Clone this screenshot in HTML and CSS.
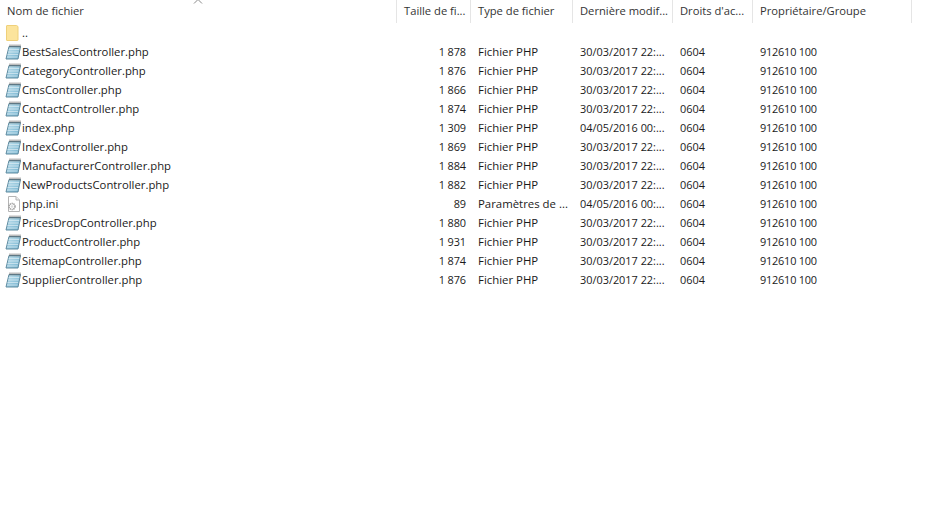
FILE: index.html
```html
<!DOCTYPE html>
<html lang="fr">
<head>
    <meta charset="UTF-8">
    <title>Fichiers distants</title>
    <link rel="stylesheet" href="styles.css">
</head>
<body>
    <svg class="defs" width="0" height="0">
        <defs>
            <linearGradient id="sheet" x1="0" y1="0" x2="1" y2="1">
                <stop offset="0" stop-color="#c4e3ef"/>
                <stop offset="1" stop-color="#6fb0cd"/>
            </linearGradient>
        </defs>
        <symbol id="icon-folder" viewBox="0 0 16 16">
            <path d="M2 .5h9.500l1.500 1v13.500a.5.5 0 0 1-.5.5H2a.5.5 0 0 1-.5-.5V1a.5.5 0 0 1 .5-.5z" fill="#fce49c" stroke="#efd07a"/>
        </symbol>
        <symbol id="icon-php" viewBox="0 0 16 16">
            <path d="M4 2.500h11.500l-2.500 12.500H1z" fill="url(#sheet)" stroke="#5f8ba0"/>
            <path d="M3.700 5.500h10.500M3 8h10.500M2.500 10.500h10.500M2 13h10.500" stroke="#dcedf4" stroke-width=".7"/>
            <path d="M5 .5v3M7 .5v3M9 .5v3M11 .5v3M13 .5v3M15 .5v3" stroke="#5a5a5a" stroke-width=".8"/>
        </symbol>
        <symbol id="icon-ini" viewBox="0 0 16 16">
            <path d="M3.500 .5h7.500l3.500 3.500v11.500h-11z" fill="#fff" stroke="#b4b4b4"/>
            <path d="M11 .5v3.500h3.500" fill="#eee" stroke="#b4b4b4"/>
            <circle cx="7" cy="10.500" r="3" fill="none" stroke="#a0a0a0" stroke-width="1.600" stroke-dasharray="1.300 .6"/>
            <circle cx="7" cy="10.500" r="1.300" fill="#dcdcdc"/>
        </symbol>
    </svg>

    <div class="list">
        <div class="row head">
            <div class="cell">Nom de fichier</div>
            <div class="cell">Taille de fi...</div>
            <div class="cell">Type de fichier</div>
            <div class="cell">Dernière modif...</div>
            <div class="cell">Droits d'ac...</div>
            <div class="cell">Propriétaire/Groupe</div>
        </div>
        <svg class="sort-caret" width="10" height="5" viewBox="0 0 10 5"><path d="M1 4.500L5 .500l4 4" fill="none" stroke="#8a8a8a"/></svg>

        <div class="row">
            <div class="cell name"><svg class="icon"><use href="#icon-folder"/></svg>..</div>
        </div>
        <div class="row">
            <div class="cell name"><svg class="icon"><use href="#icon-php"/></svg>BestSalesController.php</div>
            <div class="cell size">1 878</div><div class="cell">Fichier PHP</div><div class="cell num">30/03/2017 22:...</div><div class="cell num">0604</div><div class="cell owner">912610 100</div>
        </div>
        <div class="row">
            <div class="cell name"><svg class="icon"><use href="#icon-php"/></svg>CategoryController.php</div>
            <div class="cell size">1 876</div><div class="cell">Fichier PHP</div><div class="cell num">30/03/2017 22:...</div><div class="cell num">0604</div><div class="cell owner">912610 100</div>
        </div>
        <div class="row">
            <div class="cell name"><svg class="icon"><use href="#icon-php"/></svg>CmsController.php</div>
            <div class="cell size">1 866</div><div class="cell">Fichier PHP</div><div class="cell num">30/03/2017 22:...</div><div class="cell num">0604</div><div class="cell owner">912610 100</div>
        </div>
        <div class="row">
            <div class="cell name"><svg class="icon"><use href="#icon-php"/></svg>ContactController.php</div>
            <div class="cell size">1 874</div><div class="cell">Fichier PHP</div><div class="cell num">30/03/2017 22:...</div><div class="cell num">0604</div><div class="cell owner">912610 100</div>
        </div>
        <div class="row">
            <div class="cell name"><svg class="icon"><use href="#icon-php"/></svg>index.php</div>
            <div class="cell size">1 309</div><div class="cell">Fichier PHP</div><div class="cell num">04/05/2016 00:...</div><div class="cell num">0604</div><div class="cell owner">912610 100</div>
        </div>
        <div class="row">
            <div class="cell name"><svg class="icon"><use href="#icon-php"/></svg>IndexController.php</div>
            <div class="cell size">1 869</div><div class="cell">Fichier PHP</div><div class="cell num">30/03/2017 22:...</div><div class="cell num">0604</div><div class="cell owner">912610 100</div>
        </div>
        <div class="row">
            <div class="cell name"><svg class="icon"><use href="#icon-php"/></svg>ManufacturerController.php</div>
            <div class="cell size">1 884</div><div class="cell">Fichier PHP</div><div class="cell num">30/03/2017 22:...</div><div class="cell num">0604</div><div class="cell owner">912610 100</div>
        </div>
        <div class="row">
            <div class="cell name"><svg class="icon"><use href="#icon-php"/></svg>NewProductsController.php</div>
            <div class="cell size">1 882</div><div class="cell">Fichier PHP</div><div class="cell num">30/03/2017 22:...</div><div class="cell num">0604</div><div class="cell owner">912610 100</div>
        </div>
        <div class="row">
            <div class="cell name"><svg class="icon"><use href="#icon-ini"/></svg>php.ini</div>
            <div class="cell size">89</div><div class="cell">Paramètres de ...</div><div class="cell num">04/05/2016 00:...</div><div class="cell num">0604</div><div class="cell owner">912610 100</div>
        </div>
        <div class="row">
            <div class="cell name"><svg class="icon"><use href="#icon-php"/></svg>PricesDropController.php</div>
            <div class="cell size">1 880</div><div class="cell">Fichier PHP</div><div class="cell num">30/03/2017 22:...</div><div class="cell num">0604</div><div class="cell owner">912610 100</div>
        </div>
        <div class="row">
            <div class="cell name"><svg class="icon"><use href="#icon-php"/></svg>ProductController.php</div>
            <div class="cell size">1 931</div><div class="cell">Fichier PHP</div><div class="cell num">30/03/2017 22:...</div><div class="cell num">0604</div><div class="cell owner">912610 100</div>
        </div>
        <div class="row">
            <div class="cell name"><svg class="icon"><use href="#icon-php"/></svg>SitemapController.php</div>
            <div class="cell size">1 874</div><div class="cell">Fichier PHP</div><div class="cell num">30/03/2017 22:...</div><div class="cell num">0604</div><div class="cell owner">912610 100</div>
        </div>
        <div class="row">
            <div class="cell name"><svg class="icon"><use href="#icon-php"/></svg>SupplierController.php</div>
            <div class="cell size">1 876</div><div class="cell">Fichier PHP</div><div class="cell num">30/03/2017 22:...</div><div class="cell num">0604</div><div class="cell owner">912610 100</div>
        </div>
    </div>
</body>
</html>
```

FILE: styles.css
```css
body {
    margin: 0;
    background-color: #fff;
    color: #1a1a1a;
    font-family: 'Open Sans', 'Noto Sans', sans-serif;
    font-size: 11.4px;
    overflow: hidden;
}
.defs {
    position: absolute;
}
.list {
    position: relative;
    width: 912px;
}
.row {
    display: grid;
    grid-template-columns: 397px 74px 102px 100px 80px 159px;
    height: 19px;
    line-height: 19px;
    white-space: nowrap;
}
.head {
    height: 23px;
    line-height: 21px;
    color: #333;
    font-size: 11.2px;
}
.head .cell {
    border-right: 1px solid #e5e5e5;
}
.cell {
    padding-left: 7px;
    overflow: hidden;
}
.name {
    display: flex;
    align-items: center;
    gap: 1px;
    padding-left: 5px;
    font-size: 11.3px;
}
.size {
    padding: 0 5px 0 0;
    text-align: right;
    font-size: 10.9px;
    letter-spacing: -0.1px;
}
.num {
    font-size: 10.9px;
}
.owner {
    font-size: 10.9px;
    letter-spacing: -0.2px;
}
.icon {
    width: 16px;
    height: 16px;
    flex-shrink: 0;
}
.sort-caret {
    position: absolute;
    top: -1px;
    left: 193px;
}
```
